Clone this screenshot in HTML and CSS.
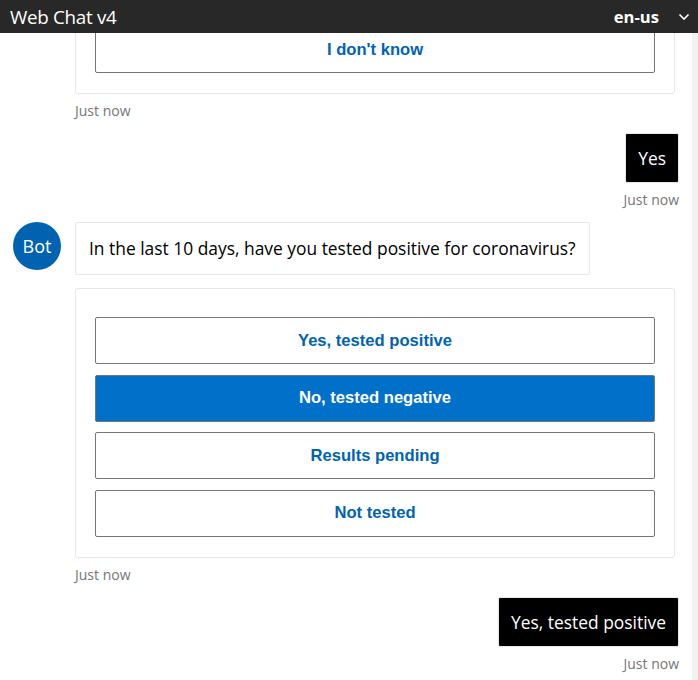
FILE: index.html
```html
<!DOCTYPE html>
<html lang="en">
<head>
<meta charset="utf-8">
<title>Web Chat v4</title>
<link rel="stylesheet" href="styles.css">
</head>
<body>
<div class="app">
  <header class="topbar">
    <span class="title">Web Chat v4</span>
    <div class="lang">
      <span class="lang-label">en-us</span>
      <svg class="chevron" width="12" height="8" viewBox="0 0 12 8"><polyline points="1.5,1.5 6,6 10.5,1.5" fill="none" stroke="#ffffff" stroke-width="1.6"/></svg>
    </div>
  </header>
  <div class="chat">
    <div class="transcript">
      <div class="list">
        <div class="activity bot first">
          <div class="row">
            <div class="avatar-spacer"></div>
            <div class="card">
              <button class="choice">I don't know</button>
            </div>
          </div>
          <div class="stamp">Just now</div>
        </div>

        <div class="activity user">
          <div class="bubble user-bubble">Yes</div>
          <div class="stamp">Just now</div>
        </div>

        <div class="activity bot">
          <div class="row">
            <div class="avatar">Bot</div>
            <div class="bubble bot-bubble">In the last 10 days, have you tested positive for coronavirus?</div>
          </div>
          <div class="row attach">
            <div class="avatar-spacer"></div>
            <div class="card">
              <button class="choice">Yes, tested positive</button>
              <button class="choice selected">No, tested negative</button>
              <button class="choice">Results pending</button>
              <button class="choice">Not tested</button>
            </div>
          </div>
          <div class="stamp">Just now</div>
        </div>

        <div class="activity user">
          <div class="bubble user-bubble">Yes, tested positive</div>
          <div class="stamp">Just now</div>
        </div>
      </div>
    </div>
    <div class="scrollbar"></div>
  </div>
</div>
</body>
</html>
```

FILE: styles.css
```css
html, body {
  margin: 0;
  padding: 0;
  background: #ffffff;
}

.app {
  width: 698px;
  height: 680px;
  display: flex;
  flex-direction: column;
  overflow: hidden;
  font-family: "Open Sans", "Noto Sans", sans-serif;
}

.topbar {
  height: 33px;
  flex: none;
  background: #282828;
  color: #ffffff;
  display: flex;
  align-items: center;
  justify-content: space-between;
  padding: 0 8px 0 10px;
  position: relative;
  z-index: 2;
}

.title {
  font-size: 18.8px;
  letter-spacing: -0.3px;
}

.lang {
  display: flex;
  align-items: center;
  gap: 19px;
}

.lang-label {
  font-size: 16.6px;
  font-weight: 700;
}

.chevron {
  display: block;
}

.chat {
  flex: 1;
  display: flex;
  min-height: 0;
}

.transcript {
  flex: 1;
  overflow: hidden;
}

.scrollbar {
  width: 6px;
  flex: none;
  background: #f1f1f1;
}

.list {
  margin-top: -36px;
  padding: 0 13px;
  display: flex;
  flex-direction: column;
}

.activity {
  display: flex;
  flex-direction: column;
  margin-top: 13px;
}

.activity.first {
  margin-top: 0;
}

.activity.user {
  align-items: flex-end;
}

.row {
  display: flex;
  align-items: flex-start;
}

.row.attach {
  margin-top: 13px;
}

.avatar,
.avatar-spacer {
  width: 48px;
  height: 48px;
  margin-right: 14px;
  flex: none;
}

.avatar {
  border-radius: 50%;
  background: #0063b1;
  color: #ffffff;
  font-size: 18px;
  display: flex;
  align-items: center;
  justify-content: center;
}

.avatar-spacer {
  height: 1px;
}

.bubble {
  font-size: 17.4px;
  line-height: 24px;
  border-radius: 2px;
}

.bot-bubble {
  background: #ffffff;
  border: 1px solid #e6e6e6;
  padding: 13px 13px 14px 13px;
  color: #000000;
}

.user-bubble {
  background: #000000;
  color: #ffffff;
  border: 1px solid #e6e6e6;
  padding: 12px 12px;
}

.card {
  width: 600px;
  box-sizing: border-box;
  border: 1px solid #e6e6e6;
  border-radius: 3px;
  background: #ffffff;
  padding: 28px 19px 20px 19px;
  display: flex;
  flex-direction: column;
  gap: 10.5px;
}

.choice {
  height: 47px;
  width: 100%;
  border: 1px solid #767676;
  border-radius: 2px;
  background: #ffffff;
  color: #0063b1;
  font-family: "Liberation Sans", Arial, sans-serif;
  font-size: 16.6px;
  font-weight: 700;
  padding: 0;
  margin: 0;
}

.choice.selected {
  background: #0070c8;
  color: #ffffff;
}

.stamp {
  margin-top: 8px;
  font-size: 14px;
  line-height: 18px;
  color: #767676;
}

.activity.bot .stamp {
  padding-left: 62px;
}
```
